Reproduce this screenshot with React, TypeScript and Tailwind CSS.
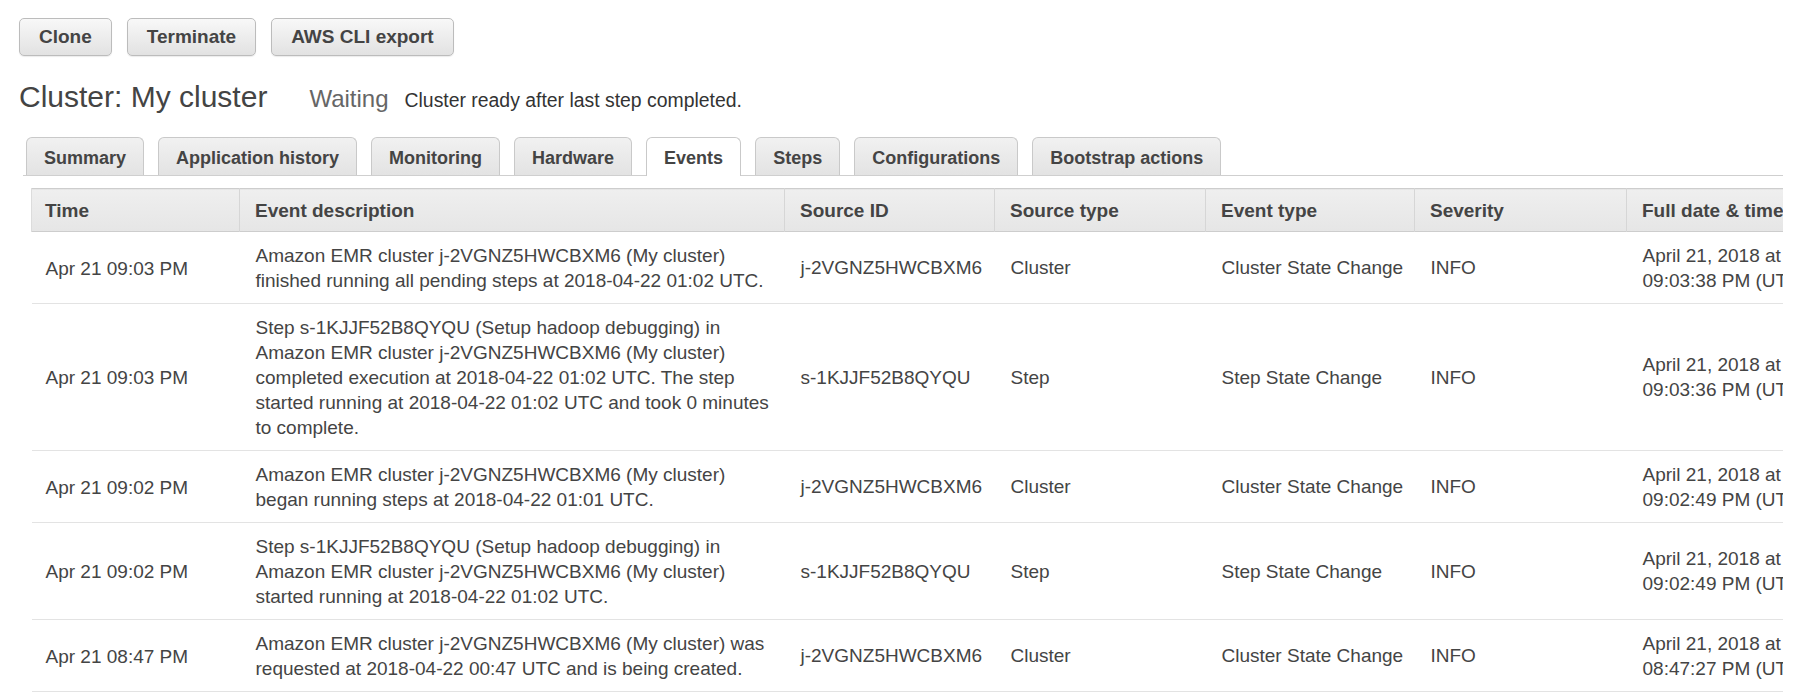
const buttons = ['Clone', 'Terminate', 'AWS CLI export'];

const tabs = [
    'Summary',
    'Application history',
    'Monitoring',
    'Hardware',
    'Events',
    'Steps',
    'Configurations',
    'Bootstrap actions',
];

const columns = [
    { label: 'Time', width: 208 },
    { label: 'Event description', width: 545 },
    { label: 'Source ID', width: 210 },
    { label: 'Source type', width: 211 },
    { label: 'Event type', width: 209 },
    { label: 'Severity', width: 212 },
    { label: 'Full date & time', width: 260 },
];

type EventRow = {
    time: string;
    description: string[];
    sourceId: string;
    sourceType: string;
    eventType: string;
    severity: string;
    full: string[];
};

const clusterId = 'j-2VGNZ5HWCBXM6';
const stepId = 's-1KJJF52B8QYQU';

const rows: EventRow[] = [
    {
        time: 'Apr 21 09:03 PM',
        description: [
            'Amazon EMR cluster j-2VGNZ5HWCBXM6 (My cluster)',
            'finished running all pending steps at 2018-04-22 01:02 UTC.',
        ],
        sourceId: clusterId,
        sourceType: 'Cluster',
        eventType: 'Cluster State Change',
        severity: 'INFO',
        full: ['April 21, 2018 at', '09:03:38 PM (UTC-4)'],
    },
    {
        time: 'Apr 21 09:03 PM',
        description: [
            'Step s-1KJJF52B8QYQU (Setup hadoop debugging) in',
            'Amazon EMR cluster j-2VGNZ5HWCBXM6 (My cluster)',
            'completed execution at 2018-04-22 01:02 UTC. The step',
            'started running at 2018-04-22 01:02 UTC and took 0 minutes',
            'to complete.',
        ],
        sourceId: stepId,
        sourceType: 'Step',
        eventType: 'Step State Change',
        severity: 'INFO',
        full: ['April 21, 2018 at', '09:03:36 PM (UTC-4)'],
    },
    {
        time: 'Apr 21 09:02 PM',
        description: [
            'Amazon EMR cluster j-2VGNZ5HWCBXM6 (My cluster)',
            'began running steps at 2018-04-22 01:01 UTC.',
        ],
        sourceId: clusterId,
        sourceType: 'Cluster',
        eventType: 'Cluster State Change',
        severity: 'INFO',
        full: ['April 21, 2018 at', '09:02:49 PM (UTC-4)'],
    },
    {
        time: 'Apr 21 09:02 PM',
        description: [
            'Step s-1KJJF52B8QYQU (Setup hadoop debugging) in',
            'Amazon EMR cluster j-2VGNZ5HWCBXM6 (My cluster)',
            'started running at 2018-04-22 01:02 UTC.',
        ],
        sourceId: stepId,
        sourceType: 'Step',
        eventType: 'Step State Change',
        severity: 'INFO',
        full: ['April 21, 2018 at', '09:02:49 PM (UTC-4)'],
    },
    {
        time: 'Apr 21 08:47 PM',
        description: [
            'Amazon EMR cluster j-2VGNZ5HWCBXM6 (My cluster) was',
            'requested at 2018-04-22 00:47 UTC and is being created.',
        ],
        sourceId: clusterId,
        sourceType: 'Cluster',
        eventType: 'Cluster State Change',
        severity: 'INFO',
        full: ['April 21, 2018 at', '08:47:27 PM (UTC-4)'],
    },
];

function Lines({ lines }: { lines: string[] }) {
    return (
        <>
            {lines.map((l, i) => (
                <div key={i} className="whitespace-nowrap">
                    {l}
                </div>
            ))}
        </>
    );
}

export default function App() {
    return (
        <div className="h-[692px] w-[1783px] overflow-hidden bg-white pl-[19px] font-['Liberation_Sans',Arial,sans-serif] text-[#444]">
            {/* action buttons */}
            <div className="flex gap-[15px] pt-[18px]">
                {buttons.map((b) => (
                    <button
                        key={b}
                        className="h-[38px] rounded-[5px] border border-[#bcbcbc] bg-gradient-to-b from-[#f8f8f8] to-[#e2e2e2] px-[19px] text-[19px] font-bold text-[#444] shadow-[0_1px_1px_rgba(0,0,0,0.08)]"
                    >
                        {b}
                    </button>
                ))}
            </div>

            {/* heading */}
            <div className="mt-[23px] flex items-baseline">
                <h1 className="text-[30px] leading-[36px] font-normal text-[#444]">Cluster: My cluster</h1>
                <span className="ml-[42px] text-[24px] text-[#666]">Waiting</span>
                <span className="ml-[16px] text-[19.4px] text-[#333]">Cluster ready after last step completed.</span>
            </div>

            {/* tabs */}
            <div className="mt-[20px] ml-[4px] flex gap-[14px] border-b border-[#cfcfcf] pl-[3px]">
                {tabs.map((t) => {
                    const active = t === 'Events';
                    return (
                        <div
                            key={t}
                            className={
                                active
                                    ? '-mb-px flex h-[39px] items-center rounded-t-[6px] border border-b-0 border-[#c9c9c9] bg-white px-[17px] pt-[3px] text-[18px] font-bold text-[#444]'
                                    : 'flex h-[38px] items-center rounded-t-[6px] border border-b-0 border-[#c9c9c9] bg-gradient-to-b from-[#f1f1f1] to-[#e3e3e3] px-[17px] pt-[3px] text-[18px] font-bold text-[#444]'
                            }
                        >
                            {t}
                        </div>
                    );
                })}
            </div>

            {/* events table */}
            <div className="mt-[12px] ml-[12px]">
                <table className="w-[1855px] table-fixed border-collapse text-[19px] leading-[25px]">
                    <colgroup>
                        {columns.map((c) => (
                            <col key={c.label} style={{ width: c.width }} />
                        ))}
                    </colgroup>
                    <thead>
                        <tr className="h-[43px] border-t border-b border-[#cdcdcd] bg-gradient-to-b from-[#efefef] to-[#e6e6e6]">
                            {columns.map((c, i) => (
                                <th
                                    key={c.label}
                                    className={
                                        i === 0
                                            ? 'border-l border-[#dcdcdc] pl-[13px] text-left font-bold whitespace-nowrap'
                                            : 'border-l border-[#d6d6d6] pl-[15px] text-left font-bold whitespace-nowrap'
                                    }
                                >
                                    {c.label}
                                </th>
                            ))}
                        </tr>
                    </thead>
                    <tbody>
                        {rows.map((r, i) => (
                            <tr key={i} className="border-b border-[#e3e3e3] align-middle">
                                <td className="pt-[11px] pb-[10px] pl-[14px] whitespace-nowrap">{r.time}</td>
                                <td className="pt-[11px] pb-[10px] pl-[16px]">
                                    <Lines lines={r.description} />
                                </td>
                                <td className="pl-[16px] whitespace-nowrap">{r.sourceId}</td>
                                <td className="pl-[16px] whitespace-nowrap">{r.sourceType}</td>
                                <td className="pl-[16px] whitespace-nowrap">{r.eventType}</td>
                                <td className="pl-[16px] whitespace-nowrap">{r.severity}</td>
                                <td className="pl-[16px]">
                                    <Lines lines={r.full} />
                                </td>
                            </tr>
                        ))}
                    </tbody>
                </table>
            </div>
        </div>
    );
}
